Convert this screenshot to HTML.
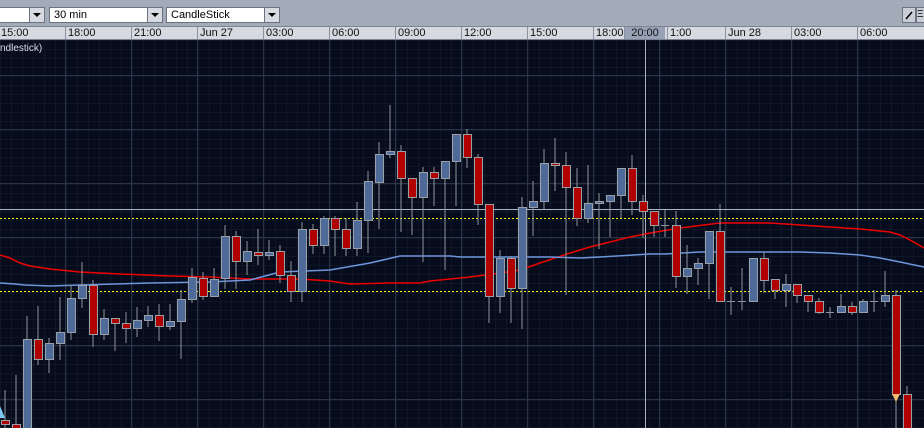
<!DOCTYPE html>
<html><head><meta charset="utf-8"><style>
body{margin:0;width:924px;height:428px;overflow:hidden;background:#a3abb9;font-family:"Liberation Sans",sans-serif;position:relative}
.cb{position:absolute;top:7px;height:16px;background:#fff;border:1px solid #6b7280;box-sizing:border-box;font-size:11px;line-height:14px;padding-left:4px;color:#000}
.cb .bt{position:absolute;right:0;top:0;width:14px;height:14px;background:#d8dbe2;border-left:1px solid #6b7280}
.cb .bt:after{content:"";position:absolute;left:3px;top:5px;border-left:4px solid transparent;border-right:4px solid transparent;border-top:4px solid #000}
.axis{position:absolute;top:26px;left:0;width:924px;height:14px;background:#d6d9e0;border-top:1px solid #7c8494;border-bottom:1px solid #7c8494;box-sizing:border-box}
.t{position:absolute;top:0;height:12px;font-size:11px;line-height:13px;border-left:1px solid #8c93a0;padding-left:2px;color:#111}
</style></head><body>
<div class="cb" style="left:-2px;width:47px"><div class="bt"></div></div>
<div class="cb" style="left:49px;width:114px">30 min<div class="bt"></div></div>
<div class="cb" style="left:166px;width:114px">CandleStick<div class="bt"></div></div>
<div style="position:absolute;left:902px;top:7px;width:14px;height:16px;border:1px solid #6b7280;box-sizing:border-box;background:#c9cdd6"><svg width="12" height="14"><line x1="3" y1="11" x2="9" y2="4" stroke="#000" stroke-width="1.5"/></svg></div>
<div style="position:absolute;left:916px;top:7px;width:10px;height:16px;border:1px solid #6b7280;box-sizing:border-box;background:#c9cdd6;font-size:10px;line-height:14px">Ξ</div>
<div class="axis">
<span class="t" style="left:-1px;border:none">15:00</span>
<span class="t" style="left:65px">18:00</span>
<span class="t" style="left:131px">21:00</span>
<span class="t" style="left:197px">Jun 27</span>
<span class="t" style="left:263px">03:00</span>
<span class="t" style="left:329px">06:00</span>
<span class="t" style="left:395px">09:00</span>
<span class="t" style="left:461px">12:00</span>
<span class="t" style="left:527px">15:00</span>
<span class="t" style="left:593px">18:00</span>
<span class="t" style="left:624px;width:40px;background:#98a2b6;text-align:center;padding:0">20:00</span>
<span class="t" style="left:667px">1:00</span>
<span class="t" style="left:725px">Jun 28</span>
<span class="t" style="left:791px">03:00</span>
<span class="t" style="left:857px">06:00</span>
</div>
<svg style="position:absolute;left:0;top:40px" width="924" height="388" viewBox="0 40 924 388">
<defs><pattern id="g" x="0" y="40" width="11" height="9" patternUnits="userSpaceOnUse"><rect width="11" height="9" fill="#060c1b"/><path d="M0 0H11M0 0V9" stroke="#172033" stroke-width="1"/></pattern></defs>
<rect x="0" y="40" width="924" height="388" fill="url(#g)"/>
<g stroke="#2b3447" stroke-width="1">
<path d="M65.5 40V428M131.5 40V428M197.5 40V428M263.5 40V428M329.5 40V428M395.5 40V428M461.5 40V428M527.5 40V428M593.5 40V428M659.5 40V428M725.5 40V428M791.5 40V428M857.5 40V428"/>
<path d="M0 75.5H924M0 129.5H924M0 183.5H924M0 237.5H924M0 345.5H924M0 399.5H924"/>
</g>
<text x="0" y="51" fill="#d8dde6" font-size="10" font-family="Liberation Sans,sans-serif">ndlestick)</text>
<line x1="0" y1="209.5" x2="924" y2="209.5" stroke="#aab4c6" stroke-width="1"/>
<line x1="645.5" y1="40" x2="645.5" y2="428" stroke="#aab4c6" stroke-width="1"/>
<line x1="0" y1="218.5" x2="924" y2="218.5" stroke="#ffff00" stroke-dasharray="2,2"/>
<line x1="0" y1="291.5" x2="924" y2="291.5" stroke="#ffff00" stroke-dasharray="2,2"/>
<polyline fill="none" stroke="#ee0000" stroke-width="1.5" points="0,255 10,258 20,263 30,266 50,269 80,272 120,274 170,276 210,277 250,279 300,279 330,281 350,284 390,283 420,283 430,281 470,277 500,273 520,270 540,263 570,253 590,247 610,242 630,237 650,233 680,228 720,223 770,223 800,225 830,227 860,229 890,232 900,235 910,240 924,248"/>
<polyline fill="none" stroke="#6f95dd" stroke-width="1.5" points="0,283 15,284 25,285 50,286 80,285 150,283 210,282 250,280 280,272 330,270 370,263 400,256 450,256 460,257 550,257 580,258 600,257 650,254 665,254 700,252 800,252 830,253 860,255 880,258 900,262 924,267"/>
<g stroke="#8f959d" stroke-width="1">
<path d="M5 390V428M16 375V428M27 316V428M38 306V365M49 338V373M60 297V360M71 285V340M82 262V308M93 280V347M104 309V340M115 318V351M126 312V343M137 307V337M148 306V327M159 304V341M170 304V330M181 290V359M192 268V303M203 272V300M214 268V297M225 225V289M236 231V289M247 241V275M258 229V265M269 240V260M280 245V283M291 261V302M302 222V302M313 224V254M324 216V254M335 216V256M346 218V256M357 202V256M368 171V253M379 142V229M390 105V158M401 145V232M412 178V235M423 167V262M434 167V206M445 161V270M456 134V206M467 129V168M478 154V225M489 204V323M500 250V313M511 256V323M522 197V329M533 181V236M544 149V209M555 138V191M566 152V295M577 168V226M588 165V223M599 193V249M610 195V237M621 168V218M632 155V215M643 195V238M654 211V237M665 210V237M676 211V288M687 245V294M698 258V285M709 231V299M720 204V301M731 287V315M742 268V310M753 258V301M764 252V293M775 279V299M786 274V307M797 284V303M808 295V312M819 298V314M830 307V318M841 294V312M852 302V315M863 299V312M874 290V312M885 271V307M896 290V428M907 386V428"/>
<path d="M661 225.5H669M727 301.5H735M738 301.5H746M826 312.5H834M870 301.5H878"/>
</g>
<g stroke="#9aa0a8" stroke-width="1" fill="#b00000">
<rect x="1.5" y="420.5" width="8" height="4"/><rect x="12.5" y="424.5" width="8" height="5"/><rect x="34.5" y="339.5" width="8" height="20"/><rect x="89.5" y="285.5" width="8" height="49"/><rect x="111.5" y="318.5" width="8" height="5"/><rect x="122.5" y="323.5" width="8" height="5"/><rect x="155.5" y="315.5" width="8" height="11"/><rect x="199.5" y="278.5" width="8" height="18"/><rect x="232.5" y="236.5" width="8" height="25"/><rect x="254.5" y="252.5" width="8" height="3"/><rect x="276.5" y="251.5" width="8" height="24"/><rect x="287.5" y="275.5" width="8" height="16"/><rect x="309.5" y="229.5" width="8" height="16"/><rect x="331.5" y="218.5" width="8" height="11"/><rect x="342.5" y="229.5" width="8" height="19"/><rect x="397.5" y="151.5" width="8" height="27"/><rect x="408.5" y="178.5" width="8" height="19"/><rect x="430.5" y="172.5" width="8" height="6"/><rect x="463.5" y="134.5" width="8" height="23"/><rect x="474.5" y="157.5" width="8" height="47"/><rect x="485.5" y="204.5" width="8" height="92"/><rect x="507.5" y="258.5" width="8" height="30"/><rect x="551.5" y="163.5" width="8" height="2"/><rect x="562.5" y="165.5" width="8" height="22"/><rect x="573.5" y="187.5" width="8" height="31"/><rect x="628.5" y="168.5" width="8" height="33"/><rect x="639.5" y="201.5" width="8" height="10"/><rect x="650.5" y="211.5" width="8" height="14"/><rect x="672.5" y="225.5" width="8" height="51"/><rect x="716.5" y="231.5" width="8" height="70"/><rect x="760.5" y="258.5" width="8" height="22"/><rect x="771.5" y="279.5" width="8" height="11"/><rect x="793.5" y="284.5" width="8" height="11"/><rect x="804.5" y="295.5" width="8" height="6"/><rect x="815.5" y="301.5" width="8" height="11"/><rect x="848.5" y="306.5" width="8" height="6"/><rect x="892.5" y="295.5" width="8" height="99"/><rect x="903.5" y="394.5" width="8" height="35"/>
</g>
<g stroke="#9aa0a8" stroke-width="1" fill="#4d6a98">
<rect x="23.5" y="339.5" width="8" height="90"/><rect x="45.5" y="343.5" width="8" height="16"/><rect x="56.5" y="332.5" width="8" height="11"/><rect x="67.5" y="298.5" width="8" height="34"/><rect x="78.5" y="285.5" width="8" height="13"/><rect x="100.5" y="318.5" width="8" height="16"/><rect x="133.5" y="320.5" width="8" height="8"/><rect x="144.5" y="315.5" width="8" height="5"/><rect x="166.5" y="321.5" width="8" height="5"/><rect x="177.5" y="299.5" width="8" height="22"/><rect x="188.5" y="277.5" width="8" height="22"/><rect x="210.5" y="279.5" width="8" height="17"/><rect x="221.5" y="236.5" width="8" height="42"/><rect x="243.5" y="251.5" width="8" height="10"/><rect x="265.5" y="252.5" width="8" height="3"/><rect x="298.5" y="229.5" width="8" height="62"/><rect x="320.5" y="218.5" width="8" height="27"/><rect x="353.5" y="220.5" width="8" height="28"/><rect x="364.5" y="181.5" width="8" height="39"/><rect x="375.5" y="154.5" width="8" height="28"/><rect x="386.5" y="151.5" width="8" height="3"/><rect x="419.5" y="172.5" width="8" height="25"/><rect x="441.5" y="161.5" width="8" height="17"/><rect x="452.5" y="134.5" width="8" height="27"/><rect x="496.5" y="258.5" width="8" height="38"/><rect x="518.5" y="207.5" width="8" height="81"/><rect x="529.5" y="201.5" width="8" height="6"/><rect x="540.5" y="163.5" width="8" height="38"/><rect x="584.5" y="203.5" width="8" height="15"/><rect x="595.5" y="201.5" width="8" height="2"/><rect x="606.5" y="195.5" width="8" height="6"/><rect x="617.5" y="168.5" width="8" height="27"/><rect x="683.5" y="268.5" width="8" height="8"/><rect x="694.5" y="263.5" width="8" height="5"/><rect x="705.5" y="231.5" width="8" height="32"/><rect x="749.5" y="258.5" width="8" height="43"/><rect x="782.5" y="284.5" width="8" height="6"/><rect x="837.5" y="306.5" width="8" height="6"/><rect x="859.5" y="301.5" width="8" height="11"/><rect x="881.5" y="295.5" width="8" height="6"/>
</g>
<polygon points="0,406 5,418 0,418" fill="#7cc8f0"/>
<polygon points="892,394 900,394 896,402" fill="#f4b870"/>
</svg>
</body></html>
